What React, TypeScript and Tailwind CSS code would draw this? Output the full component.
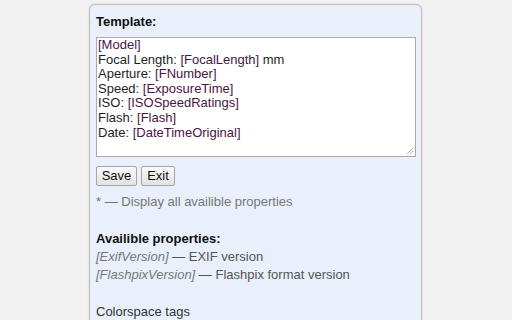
const lines: [string, string, string][] = [
  ["", "[Model]", ""],
  ["Focal Length: ", "[FocalLength]", " mm"],
  ["Aperture: ", "[FNumber]", ""],
  ["Speed: ", "[ExposureTime]", ""],
  ["ISO: ", "[ISOSpeedRatings]", ""],
  ["Flash: ", "[Flash]", ""],
  ["Date: ", "[DateTimeOriginal]", ""],
];

const props = [
  { tag: "[ExifVersion]", desc: "EXIF version" },
  { tag: "[FlashpixVersion]", desc: "Flashpix format version" },
];

export default function App() {
  return (
    <div
      className="w-[512px] h-[320px] overflow-hidden bg-[#f1f1f1] text-[13px] text-[#222]"
      style={{ fontFamily: '"Liberation Sans", Arial, sans-serif' }}
    >
      <div className="ml-[89px] mt-[4px] w-[333px] h-[330px] rounded-[6px] border border-[#bdbdbd] bg-[#e9f0fb] px-[6px] pt-[9px] shadow-[0_0_2px_rgba(0,0,0,0.15)]">
        <div className="font-bold leading-[15px] text-[#111]">Template:</div>

        <div className="relative mt-[8px] h-[120px] w-[320px] border border-[#a9a9a9] bg-white px-[1px] pt-[0px] leading-[14.6px] text-[#1e1e1e]">
          {lines.map(([a, b, c], i) => (
            <div key={i}>
              {a}
              <span className="text-[#4a1542]">{b}</span>
              {c}
            </div>
          ))}
          <svg
            className="absolute right-[1px] bottom-[1px]"
            width="9"
            height="9"
            viewBox="0 0 9 9"
          >
            <path d="M8 2 L2 8 M8 5 L5 8" stroke="#aaa" strokeWidth="1" />
          </svg>
        </div>

        <div className="mt-[9px] flex gap-[4px]">
          <button className="h-[20px] w-[41px] rounded-[2px] border border-[#a6a6a6] bg-gradient-to-b from-[#fafafa] to-[#e2e2e2] text-[13px] leading-[18px] text-[#111]">
            Save
          </button>
          <button className="h-[20px] w-[34px] rounded-[2px] border border-[#a6a6a6] bg-gradient-to-b from-[#fafafa] to-[#e2e2e2] text-[13px] leading-[18px] text-[#111]">
            Exit
          </button>
        </div>

        <div className="mt-[7px] leading-[18px] text-[#777]">
          * — Display all availible properties
        </div>

        <div className="mt-[19px] font-bold leading-[18px] text-[#111]">
          Availible properties:
        </div>
        {props.map((p) => (
          <div key={p.tag} className="leading-[18px] text-[#555]">
            <i className="text-[#777]">{p.tag}</i> — {p.desc}
          </div>
        ))}

        <div className="mt-[19px] leading-[18px] text-[#333]">
          Colorspace tags
        </div>
      </div>
    </div>
  );
}
